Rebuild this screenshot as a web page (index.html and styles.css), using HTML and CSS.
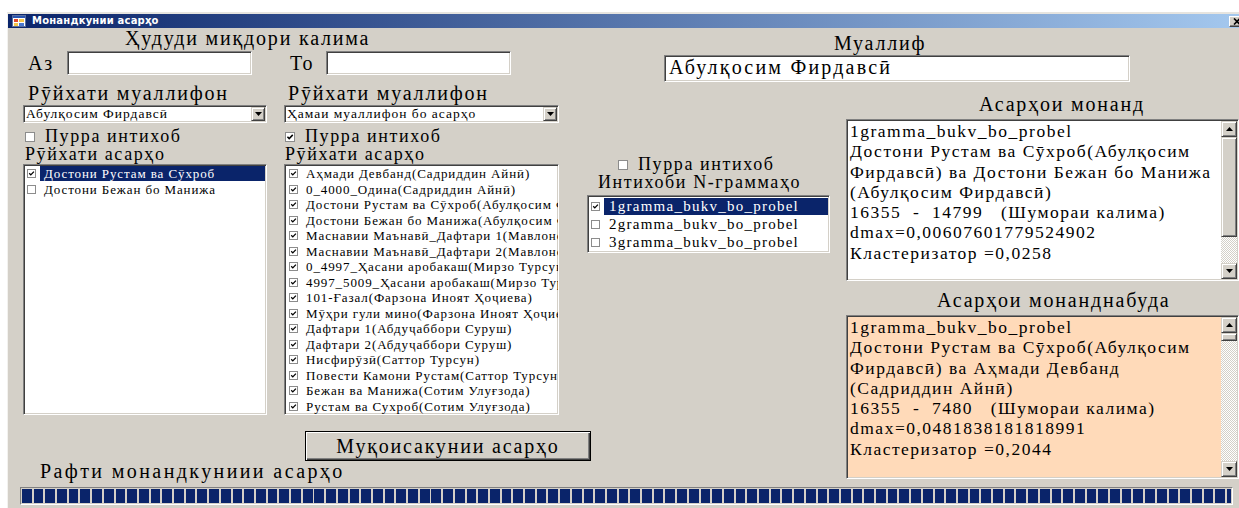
FILE: index.html
```html
<!DOCTYPE html>
<html lang="tg">
<head>
<meta charset="utf-8">
<title>Монандкунии асарҳо</title>
<link rel="stylesheet" href="styles.css">
</head>
<body>
<div class="window">
  <div class="titlebar">
    <svg class="app-icon" width="14" height="12" viewBox="0 0 14 12">
      <rect x="0.5" y="0.5" width="13" height="11" fill="#fff" stroke="#5a6f9e"/>
      <rect x="1" y="1" width="12" height="2" fill="#2a55b0"/>
      <rect x="2" y="4" width="4" height="3" fill="#e0482c"/>
      <rect x="7" y="4" width="5" height="3" fill="#f5c64a"/>
      <rect x="2" y="8" width="4" height="3" fill="#f5c64a"/>
      <rect x="7" y="8" width="5" height="3" fill="#4a78d0"/>
    </svg>
    <span class="title-text">Монандкунии асарҳо</span>
    <span class="cap-btn">
      <svg width="8" height="7" viewBox="0 0 8 7"><path d="M1 0.5 L7 6.5 M7 0.5 L1 6.5" stroke="#000" stroke-width="1.6"/></svg>
    </span>
  </div>

  <div class="client">
    <div class="main">
      <section class="left">
        <div class="lbl-big range-title">Ҳудуди миқдори калима</div>
        <div class="range-row">
          <span class="lbl-big range-lbl">Аз</span>
          <span class="field range-box"></span>
          <span class="lbl-big range-lbl to">То</span>
          <span class="field range-box"></span>
        </div>

        <div class="lists">
          <div class="col col-a">
            <div class="lbl-big col-cap">Рӯйхати муаллифон</div>
            <div class="combo">
              <span class="combo-text">Абулқосим Фирдавсӣ</span>
              <span class="combo-btn raised"><svg width="7" height="4" viewBox="0 0 7 4"><path d="M0 0 H7 L3.5 4 Z" fill="#000"/></svg></span>
            </div>
            <div class="check-row">
              <span class="box"></span>
              <span class="lbl-mid">Пурра интихоб</span>
            </div>
            <div class="lbl-mid list-cap">Рӯйхати асарҳо</div>
            <ul class="listbox works works-a">
              <li><span class="ibox on"></span><span class="itext sel">Достони Рустам ва Сӯхроб</span></li>
              <li><span class="ibox"></span><span class="itext">Достони Бежан бо Манижа</span></li>
            </ul>
          </div>

          <div class="col col-b">
            <div class="lbl-big col-cap">Рӯйхати муаллифон</div>
            <div class="combo">
              <span class="combo-text">Ҳамаи муаллифон бо асарҳо</span>
              <span class="combo-btn raised"><svg width="7" height="4" viewBox="0 0 7 4"><path d="M0 0 H7 L3.5 4 Z" fill="#000"/></svg></span>
            </div>
            <div class="check-row">
              <span class="box on"></span>
              <span class="lbl-mid">Пурра интихоб</span>
            </div>
            <div class="lbl-mid list-cap">Рӯйхати асарҳо</div>
            <ul class="listbox works works-b">
              <li><span class="ibox on"></span><span class="itext">Аҳмади Девбанд(Садриддин Айнӣ)</span></li>
              <li><span class="ibox on"></span><span class="itext">0_4000_Одина(Садриддин Айнӣ)</span></li>
              <li><span class="ibox on"></span><span class="itext">Достони Рустам ва Сӯхроб(Абулқосим Фирдавсӣ)</span></li>
              <li><span class="ibox on"></span><span class="itext">Достони Бежан бо Манижа(Абулқосим Фирдавсӣ)</span></li>
              <li><span class="ibox on"></span><span class="itext">Маснавии Маънавӣ_Дафтари 1(Мавлоно Ҷалолиддини Румӣ)</span></li>
              <li><span class="ibox on"></span><span class="itext">Маснавии Маънавӣ_Дафтари 2(Мавлоно Ҷалолиддини Румӣ)</span></li>
              <li><span class="ibox on"></span><span class="itext">0_4997_Ҳасани аробакаш(Мирзо Турсунзода)</span></li>
              <li><span class="ibox on"></span><span class="itext">4997_5009_Ҳасани аробакаш(Мирзо Турсунзода)</span></li>
              <li><span class="ibox on"></span><span class="itext">101-Ғазал(Фарзона Иноят Ҳоҷиева)</span></li>
              <li><span class="ibox on"></span><span class="itext">Мӯҳри гули мино(Фарзона Иноят Ҳоҷиева)</span></li>
              <li><span class="ibox on"></span><span class="itext">Дафтари 1(Абдуҷаббори Суруш)</span></li>
              <li><span class="ibox on"></span><span class="itext">Дафтари 2(Абдуҷаббори Суруш)</span></li>
              <li><span class="ibox on"></span><span class="itext">Нисфирӯзӣ(Саттор Турсун)</span></li>
              <li><span class="ibox on"></span><span class="itext">Повести Камони Рустам(Саттор Турсун)</span></li>
              <li><span class="ibox on"></span><span class="itext">Бежан ва Манижа(Сотим Улуғзода)</span></li>
              <li><span class="ibox on"></span><span class="itext">Рустам ва Сухроб(Сотим Улуғзода)</span></li>
            </ul>
          </div>
        </div>

        <button class="push" type="button">Муқоисакунии асарҳо</button>
        <div class="lbl-big progress-cap">Рафти монандкуниии асарҳо</div>
      </section>

      <section class="right">
        <div class="lbl-big author-cap">Муаллиф</div>
        <div class="field author-box">Абулқосим Фирдавсӣ</div>

        <div class="right-body">
          <div class="ngram">
            <div class="check-row">
              <span class="box"></span>
              <span class="lbl-mid">Пурра интихоб</span>
            </div>
            <div class="lbl-mid ngram-cap">Интихоби N-граммаҳо</div>
            <ul class="listbox grams">
              <li><span class="ibox on"></span><span class="itext sel">1gramma_bukv_bo_probel</span></li>
              <li><span class="ibox"></span><span class="itext">2gramma_bukv_bo_probel</span></li>
              <li><span class="ibox"></span><span class="itext">3gramma_bukv_bo_probel</span></li>
            </ul>
          </div>

          <div class="results">
            <div class="lbl-big res-cap res-cap-1">Асарҳои монанд</div>
            <div class="memo memo-1">
              <div class="memo-text">1gramma_bukv_bo_probel
Достони Рустам ва Сӯхроб(Абулқосим
Фирдавсӣ) ва Достони Бежан бо Манижа
(Абулқосим Фирдавсӣ)
16355  -  14799   (Шумораи калима)
dmax=0,00607601779524902
Кластеризатор =0,0258</div>
              <div class="vscroll">
                <span class="sb-btn raised"><svg width="7" height="4" viewBox="0 0 7 4"><path d="M0 4 H7 L3.5 0 Z" fill="#000"/></svg></span>
                <span class="sb-thumb raised thumb-1"></span>
                <span class="sb-track"></span>
                <span class="sb-btn raised"><svg width="7" height="4" viewBox="0 0 7 4"><path d="M0 0 H7 L3.5 4 Z" fill="#000"/></svg></span>
              </div>
            </div>

            <div class="lbl-big res-cap res-cap-2">Асарҳои монанднабуда</div>
            <div class="memo memo-2">
              <div class="memo-text">1gramma_bukv_bo_probel
Достони Рустам ва Сӯхроб(Абулқосим
Фирдавсӣ) ва Аҳмади Девбанд
(Садриддин Айнӣ)
16355  -  7480   (Шумораи калима)
dmax=0,0481838181818991
Кластеризатор =0,2044</div>
              <div class="vscroll">
                <span class="sb-btn raised"><svg width="7" height="4" viewBox="0 0 7 4"><path d="M0 4 H7 L3.5 0 Z" fill="#000"/></svg></span>
                <span class="sb-thumb raised thumb-2"></span>
                <span class="sb-track"></span>
                <span class="sb-btn raised"><svg width="7" height="4" viewBox="0 0 7 4"><path d="M0 0 H7 L3.5 4 Z" fill="#000"/></svg></span>
              </div>
            </div>
          </div>
        </div>
      </section>
    </div>

    <div class="progress"><div class="progress-fill"></div></div>
  </div>
</div>
</body>
</html>
```

FILE: styles.css
```css
* { box-sizing: border-box; }

html, body { margin: 0; padding: 0; }

body {
  width: 1239px;
  height: 508px;
  overflow: hidden;
  background: #fff;
  color: #000;
  font-family: "Liberation Serif", "DejaVu Serif", serif;
}

/* ---------- window frame ---------- */
.window {
  width: 1250px;
  margin: 12px 0 0 7px;
  border-top: 2px solid #e6e4df;
  border-left: 1px solid #f3f2ef;
  background: #d4d0c8;
}

.titlebar {
  height: 14px;
  display: flex;
  align-items: center;
  padding-left: 4px;
  background: linear-gradient(to right, #0a246a, #a6caf0);
}

.app-icon { flex: none; display: block; }

.title-text {
  margin-left: 6px;
  color: #fff;
  font-family: "DejaVu Sans", Verdana, sans-serif;
  font-weight: bold;
  font-size: 10px;
  letter-spacing: 0.2px;
  line-height: 14px;
}

.cap-btn {
  margin-left: auto;
  margin-right: 12px;
  width: 16px;
  height: 11px;
  display: flex;
  align-items: center;
  justify-content: center;
  background: #d4d0c8;
  border: 1px solid;
  border-color: #fff #404040 #404040 #fff;
  box-shadow: inset -1px -1px #808080;
}

.client { height: 480px; }

.main { display: flex; height: 459px; }

/* ---------- shared control looks ---------- */
.lbl-big {
  font-size: 20px;
  line-height: 20px;
  letter-spacing: 1.8px;
  white-space: nowrap;
}

.lbl-mid {
  font-size: 18px;
  line-height: 18px;
  letter-spacing: 1.6px;
  white-space: nowrap;
}

.field {
  display: block;
  background: #fff;
  border: 1px solid;
  border-color: #808080 #fff #fff #808080;
  box-shadow: inset 1px 1px #404040, inset -1px -1px #d4d0c8;
}

.raised {
  background: #d4d0c8;
  border: 1px solid;
  border-color: #d4d0c8 #404040 #404040 #d4d0c8;
  box-shadow: inset 1px 1px #fff, inset -1px -1px #808080;
}

.box, .ibox {
  flex: none;
  display: block;
  background: #fff no-repeat center / 100% 100%;
  border: 1px solid #8c8c8c;
}
.box { width: 10px; height: 10px; }
.ibox { width: 9px; height: 9px; }

.box.on, .ibox.on {
  background-image: url("data:image/svg+xml,%3Csvg xmlns='http://www.w3.org/2000/svg' viewBox='0 0 9 9'%3E%3Cpath d='M1.6 4.2 L3.6 6.3 L7.6 2.1' fill='none' stroke='%23000' stroke-width='1.7'/%3E%3C/svg%3E");
}

.check-row {
  display: flex;
  align-items: center;
  gap: 10px;
  height: 17px;
}
.check-row .lbl-mid { line-height: 17px; }

/* ---------- left part ---------- */
.left { flex: none; width: 579px; }

.range-title { padding-left: 117px; }

.range-row {
  display: flex;
  align-items: center;
  height: 24px;
  margin-top: 3px;
  padding-left: 20px;
}
.range-lbl { width: 39px; }
.range-lbl.to { width: 36px; margin-left: 38px; }
.range-box { width: 185px; height: 24px; }

.lists {
  display: flex;
  gap: 17px;
  margin-top: 8px;
  padding-left: 15px;
}
.col-a { width: 244px; }
.col-b { width: 275px; }

.col-cap { padding-left: 5px; }
.col-b .col-cap { padding-left: 4px; }

.combo {
  display: flex;
  align-items: center;
  height: 18px;
  margin-top: 2px;
  padding: 0 1px 0 2px;
  background: #fff;
  border: 1px solid;
  border-color: #808080 #fff #fff #808080;
  box-shadow: inset 1px 1px #404040, inset -1px -1px #d4d0c8;
}
.combo-text {
  flex: 1;
  font-size: 13.5px;
  letter-spacing: 1px;
  white-space: nowrap;
  overflow: hidden;
}
.combo-btn {
  flex: none;
  width: 14px;
  height: 14px;
  display: flex;
  align-items: center;
  justify-content: center;
}

.col .check-row { margin-top: 5px; padding-left: 2px; }
.col-b .check-row { padding-left: 1px; }

.list-cap { padding-left: 2px; }
.col-b .list-cap { padding-left: 1px; }

.listbox {
  list-style: none;
  margin: 0;
  padding: 1px;
  overflow: hidden;
  background: #fff;
  border: 1px solid;
  border-color: #808080 #fff #fff #808080;
  box-shadow: inset 1px 1px #404040, inset -1px -1px #d4d0c8;
}
.listbox li {
  display: flex;
  align-items: center;
  white-space: nowrap;
}

.works {
  margin-top: 1px;
  height: 251px;
}
.works li { height: 15.5px; font-size: 13px; letter-spacing: 0.9px; }
.works .ibox { margin-left: 2px; }
.works-b .ibox { margin-left: 3px; }

.itext {
  flex: 1;
  margin-left: 4px;
  padding-left: 4px;
  line-height: 15px;
}
.itext.sel { background: #0a246a; color: #fff; }

.push {
  display: block;
  width: 286px;
  height: 30px;
  margin: 16px 0 0 297px;
  padding: 0;
  font-family: inherit;
  font-size: 20px;
  line-height: 20px;
  letter-spacing: 1.8px;
  color: #000;
  background: #d4d0c8;
  border: 1px solid #000;
  box-shadow: inset 1px 1px #fff, inset -1px -1px #404040, inset -2px -2px #808080;
}

.progress-cap { padding-left: 32px; letter-spacing: 2.4px; }

/* ---------- right part ---------- */
.right { flex: none; width: 660px; }

.author-cap { margin-top: 5px; padding-left: 247px; }

.author-box {
  width: 466px;
  height: 27px;
  margin: 2px 0 0 77px;
  padding: 0 4px;
  font-size: 20px;
  line-height: 23px;
  letter-spacing: 2.2px;
  white-space: nowrap;
}

.right-body { display: flex; gap: 16px; }

.ngram { flex: none; width: 243px; padding-top: 74px; }
.ngram .check-row { padding-left: 31px; }
.ngram-cap { padding-left: 11px; }

.grams {
  margin-top: 4px;
  height: 58px;
}
.grams li { height: 18px; font-size: 15px; letter-spacing: 1.25px; }
.grams .ibox { margin-left: 2px; }
.grams .itext { padding-left: 5px; line-height: 17px; }

.results { flex: none; width: 393px; padding-top: 12px; }

.res-cap-1 { padding-left: 133px; }
.res-cap-2 { padding-left: 91px; margin-top: 9px; }

.memo {
  display: flex;
  margin-top: 5px;
  padding: 1px;
  background: #fff;
  border: 1px solid;
  border-color: #808080 #fff #fff #808080;
  box-shadow: inset 1px 1px #404040, inset -1px -1px #d4d0c8;
}
.memo-1 { height: 162px; }
.memo-2 { height: 164px; background: #ffdab9; }

.memo-text {
  flex: 1;
  overflow: hidden;
  padding-left: 2px;
  white-space: pre;
  font-size: 17.5px;
  line-height: 20.3px;
  letter-spacing: 1.5px;
}

.vscroll {
  flex: none;
  width: 16px;
  display: flex;
  flex-direction: column;
}
.sb-btn {
  flex: none;
  height: 16px;
  display: flex;
  align-items: center;
  justify-content: center;
}
.sb-thumb { flex: none; display: block; }
.thumb-1 { height: 100px; }
.thumb-2 { height: 8px; }
.sb-track {
  flex: 1;
  background: repeating-conic-gradient(#fff 0 25%, #d4d0c8 0 50%) 0 0 / 2px 2px;
}

/* ---------- progress bar ---------- */
.progress {
  width: 1213px;
  height: 18px;
  margin-left: 12px;
  padding: 1px;
  border: 1px solid;
  border-color: #808080 #fff #fff #808080;
}
.progress-fill {
  height: 100%;
  background: repeating-linear-gradient(to right, #0a246a 0 9.7px, #d4d0c8 9.7px 11.7px);
}
```
